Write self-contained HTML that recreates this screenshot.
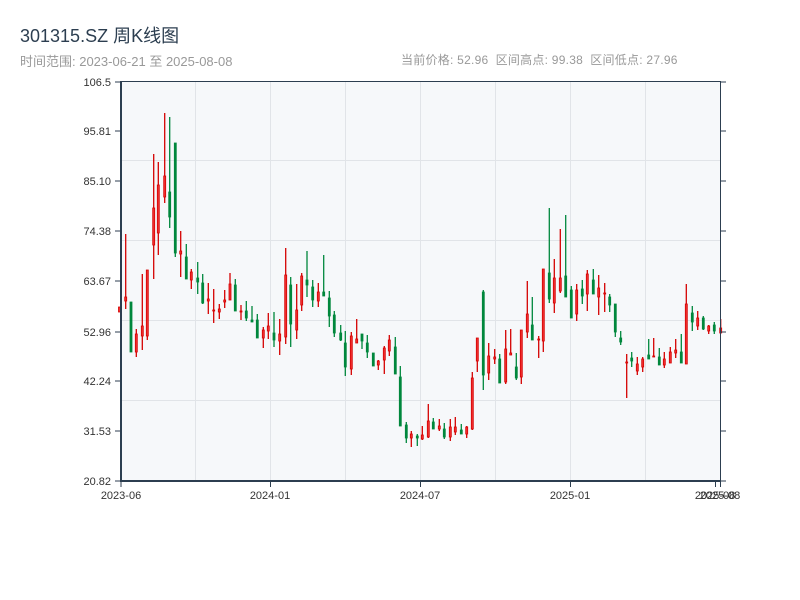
<!DOCTYPE html>
<html><head><meta charset="utf-8"><style>
body{margin:0;width:800px;height:600px;background:#fff;font-family:"Liberation Sans","Noto Sans CJK SC",sans-serif;position:relative;overflow:hidden}
.t{position:absolute;left:20px;top:22px;font-size:18px;color:#2c3e50;white-space:nowrap}
.s{position:absolute;left:20px;top:51px;font-size:13px;color:#999;white-space:nowrap}
.i{position:absolute;left:401px;top:51px;font-size:12px;letter-spacing:0.25px;color:#999;white-space:pre}
svg{position:absolute;left:0;top:0}
.r line{stroke:#d40000;stroke-width:1.3}
.r rect{fill:#f23030;stroke:#d40000;stroke-width:0.8}
.g line{stroke:#00873c;stroke-width:1.3}
.g rect{fill:#00873c;stroke:#00873c;stroke-width:0.8}
.yl{font-size:11px;fill:#333;text-anchor:end}
.xl{font-size:11px;fill:#333;text-anchor:middle}
</style></head><body>
<div class="t">301315.SZ 周K线图</div>
<div class="s">时间范围: 2023-06-21 至 2025-08-08</div>
<div class="i">当前价格: 52.96  区间高点: 99.38  区间低点: 27.96</div>
<svg width="800" height="600" font-family="Liberation Sans, sans-serif">
<rect x="121" y="81" width="599" height="400" fill="#f6f8fa"/>
<g stroke="#e1e4e8" stroke-width="1">
<line x1="195.5" y1="81" x2="195.5" y2="481"/><line x1="270.5" y1="81" x2="270.5" y2="481"/><line x1="345.5" y1="81" x2="345.5" y2="481"/><line x1="420.5" y1="81" x2="420.5" y2="481"/><line x1="495.5" y1="81" x2="495.5" y2="481"/><line x1="570.5" y1="81" x2="570.5" y2="481"/><line x1="645.5" y1="81" x2="645.5" y2="481"/>
<line x1="121" y1="160.5" x2="720" y2="160.5"/><line x1="121" y1="240.5" x2="720" y2="240.5"/><line x1="121" y1="320.5" x2="720" y2="320.5"/><line x1="121" y1="400.5" x2="720" y2="400.5"/>
</g>
<g id="c">
<g class="r"><line x1="119.5" y1="307" x2="119.5" y2="312"/><rect x="118.5" y="307" width="2" height="5"/></g>
<g class="r"><line x1="125.7" y1="234" x2="125.7" y2="309"/><rect x="124.7" y="297" width="2" height="4"/></g>
<g class="g"><line x1="131" y1="302" x2="131" y2="352"/><rect x="130" y="302" width="2" height="50"/></g>
<g class="r"><line x1="136.3" y1="329" x2="136.3" y2="357"/><rect x="135.3" y="334" width="2" height="18"/></g>
<g class="r"><line x1="142.3" y1="274" x2="142.3" y2="350"/><rect x="141.3" y="326" width="2" height="10"/></g>
<g class="r"><line x1="147.3" y1="270" x2="147.3" y2="340"/><rect x="146.3" y="270" width="2" height="66"/></g>
<g class="r"><line x1="153.7" y1="154" x2="153.7" y2="279"/><rect x="152.7" y="208" width="2" height="37"/></g>
<g class="r"><line x1="158.3" y1="162" x2="158.3" y2="255"/><rect x="157.3" y="185" width="2" height="48"/></g>
<g class="r"><line x1="164.7" y1="113" x2="164.7" y2="203"/><rect x="163.7" y="176" width="2" height="21"/></g>
<g class="g"><line x1="169.7" y1="117" x2="169.7" y2="228"/><rect x="168.7" y="192" width="2" height="25"/></g>
<g class="g"><line x1="175.3" y1="143" x2="175.3" y2="257"/><rect x="174.3" y="143" width="2" height="110"/></g>
<g class="r"><line x1="180.7" y1="231" x2="180.7" y2="277"/><rect x="179.7" y="251" width="2" height="3"/></g>
<g class="g"><line x1="186.3" y1="244" x2="186.3" y2="279"/><rect x="185.3" y="257" width="2" height="22"/></g>
<g class="r"><line x1="191.3" y1="269" x2="191.3" y2="289"/><rect x="190.3" y="272" width="2" height="8"/></g>
<g class="g"><line x1="197.7" y1="262" x2="197.7" y2="294"/><rect x="196.7" y="278" width="2" height="4"/></g>
<g class="g"><line x1="202.7" y1="274" x2="202.7" y2="304"/><rect x="201.7" y="283" width="2" height="20"/></g>
<g class="r"><line x1="208.3" y1="283" x2="208.3" y2="314"/><rect x="207.3" y="299" width="2" height="2"/></g>
<g class="r"><line x1="213.7" y1="289" x2="213.7" y2="323"/><rect x="212.7" y="310" width="2" height="1"/></g>
<g class="r"><line x1="219.3" y1="304" x2="219.3" y2="319"/><rect x="218.3" y="309" width="2" height="3"/></g>
<g class="r"><line x1="224.7" y1="290" x2="224.7" y2="308"/><rect x="223.7" y="300" width="2" height="2"/></g>
<g class="r"><line x1="230" y1="273" x2="230" y2="300"/><rect x="229" y="284" width="2" height="16"/></g>
<g class="g"><line x1="235.3" y1="279" x2="235.3" y2="311"/><rect x="234.3" y="285" width="2" height="26"/></g>
<g class="r"><line x1="241" y1="305" x2="241" y2="320"/><rect x="240" y="311" width="2" height="1"/></g>
<g class="g"><line x1="246.3" y1="301" x2="246.3" y2="321"/><rect x="245.3" y="311" width="2" height="7"/></g>
<g class="g"><line x1="252" y1="306" x2="252" y2="322"/><rect x="251" y="320" width="2" height="2"/></g>
<g class="g"><line x1="257.3" y1="314" x2="257.3" y2="338"/><rect x="256.3" y="320" width="2" height="18"/></g>
<g class="r"><line x1="263.3" y1="327" x2="263.3" y2="348"/><rect x="262.3" y="330" width="2" height="8"/></g>
<g class="r"><line x1="268.3" y1="313" x2="268.3" y2="339"/><rect x="267.3" y="326" width="2" height="5"/></g>
<g class="g"><line x1="274" y1="312" x2="274" y2="347"/><rect x="273" y="333" width="2" height="7"/></g>
<g class="r"><line x1="279.7" y1="319" x2="279.7" y2="355"/><rect x="278.7" y="334" width="2" height="7"/></g>
<g class="r"><line x1="285.7" y1="248" x2="285.7" y2="344"/><rect x="284.7" y="275" width="2" height="62"/></g>
<g class="g"><line x1="290.7" y1="277" x2="290.7" y2="347"/><rect x="289.7" y="285" width="2" height="39"/></g>
<g class="r"><line x1="296.7" y1="284" x2="296.7" y2="339"/><rect x="295.7" y="310" width="2" height="20"/></g>
<g class="r"><line x1="301.7" y1="273" x2="301.7" y2="311"/><rect x="300.7" y="276" width="2" height="29"/></g>
<g class="g"><line x1="307" y1="251" x2="307" y2="297"/><rect x="306" y="280" width="2" height="5"/></g>
<g class="g"><line x1="312.7" y1="280" x2="312.7" y2="307"/><rect x="311.7" y="287" width="2" height="13"/></g>
<g class="r"><line x1="318.3" y1="283" x2="318.3" y2="307"/><rect x="317.3" y="292" width="2" height="9"/></g>
<g class="g"><line x1="323.7" y1="255" x2="323.7" y2="296"/><rect x="322.7" y="292" width="2" height="4"/></g>
<g class="g"><line x1="329.3" y1="291" x2="329.3" y2="327"/><rect x="328.3" y="298" width="2" height="18"/></g>
<g class="g"><line x1="334.3" y1="311" x2="334.3" y2="337"/><rect x="333.3" y="315" width="2" height="18"/></g>
<g class="g"><line x1="340.7" y1="325" x2="340.7" y2="341"/><rect x="339.7" y="333" width="2" height="7"/></g>
<g class="g"><line x1="345.3" y1="331" x2="345.3" y2="376"/><rect x="344.3" y="343" width="2" height="24"/></g>
<g class="r"><line x1="351.3" y1="332" x2="351.3" y2="375"/><rect x="350.3" y="336" width="2" height="33"/></g>
<g class="r"><line x1="356.7" y1="319" x2="356.7" y2="343"/><rect x="355.7" y="339" width="2" height="4"/></g>
<g class="g"><line x1="362" y1="334" x2="362" y2="349"/><rect x="361" y="334" width="2" height="7"/></g>
<g class="g"><line x1="367.3" y1="335" x2="367.3" y2="358"/><rect x="366.3" y="343" width="2" height="9"/></g>
<g class="g"><line x1="373.3" y1="353" x2="373.3" y2="366"/><rect x="372.3" y="353" width="2" height="13"/></g>
<g class="r"><line x1="378.3" y1="360" x2="378.3" y2="370"/><rect x="377.3" y="361" width="2" height="4"/></g>
<g class="r"><line x1="384.3" y1="346" x2="384.3" y2="374"/><rect x="383.3" y="348" width="2" height="12"/></g>
<g class="r"><line x1="389.3" y1="335" x2="389.3" y2="356"/><rect x="388.3" y="340" width="2" height="11"/></g>
<g class="g"><line x1="395.3" y1="337" x2="395.3" y2="374"/><rect x="394.3" y="347" width="2" height="27"/></g>
<g class="g"><line x1="400.3" y1="366" x2="400.3" y2="426"/><rect x="399.3" y="377" width="2" height="49"/></g>
<g class="g"><line x1="406.3" y1="422" x2="406.3" y2="443"/><rect x="405.3" y="425" width="2" height="13"/></g>
<g class="r"><line x1="411.3" y1="431" x2="411.3" y2="447"/><rect x="410.3" y="434" width="2" height="4"/></g>
<g class="g"><line x1="417.3" y1="434" x2="417.3" y2="446"/><rect x="416.3" y="436" width="2" height="2"/></g>
<g class="r"><line x1="422.3" y1="426" x2="422.3" y2="440"/><rect x="421.3" y="435" width="2" height="4"/></g>
<g class="r"><line x1="428.3" y1="404" x2="428.3" y2="438"/><rect x="427.3" y="421" width="2" height="16"/></g>
<g class="g"><line x1="433.3" y1="418" x2="433.3" y2="429"/><rect x="432.3" y="422" width="2" height="7"/></g>
<g class="r"><line x1="439.3" y1="419" x2="439.3" y2="431"/><rect x="438.3" y="426" width="2" height="3"/></g>
<g class="g"><line x1="444.3" y1="423" x2="444.3" y2="439"/><rect x="443.3" y="429" width="2" height="8"/></g>
<g class="r"><line x1="450.3" y1="419" x2="450.3" y2="441"/><rect x="449.3" y="427" width="2" height="10"/></g>
<g class="r"><line x1="455.3" y1="417" x2="455.3" y2="435"/><rect x="454.3" y="427" width="2" height="5"/></g>
<g class="g"><line x1="461.3" y1="424" x2="461.3" y2="434"/><rect x="460.3" y="430" width="2" height="4"/></g>
<g class="r"><line x1="466.7" y1="426" x2="466.7" y2="438"/><rect x="465.7" y="427" width="2" height="7"/></g>
<g class="r"><line x1="472.3" y1="372" x2="472.3" y2="430"/><rect x="471.3" y="378" width="2" height="51"/></g>
<g class="r"><line x1="477.3" y1="338" x2="477.3" y2="372"/><rect x="476.3" y="338" width="2" height="23"/></g>
<g class="g"><line x1="483.3" y1="290" x2="483.3" y2="390"/><rect x="482.3" y="292" width="2" height="83"/></g>
<g class="r"><line x1="488.7" y1="343" x2="488.7" y2="380"/><rect x="487.7" y="356" width="2" height="17"/></g>
<g class="r"><line x1="494.7" y1="349" x2="494.7" y2="364"/><rect x="493.7" y="357" width="2" height="2"/></g>
<g class="g"><line x1="499.7" y1="354" x2="499.7" y2="383"/><rect x="498.7" y="359" width="2" height="24"/></g>
<g class="r"><line x1="505.7" y1="330" x2="505.7" y2="384"/><rect x="504.7" y="349" width="2" height="33"/></g>
<g class="r"><line x1="510.7" y1="329" x2="510.7" y2="355"/><rect x="509.7" y="353" width="2" height="2"/></g>
<g class="g"><line x1="516.3" y1="353" x2="516.3" y2="380"/><rect x="515.3" y="367" width="2" height="11"/></g>
<g class="r"><line x1="521.3" y1="330" x2="521.3" y2="384"/><rect x="520.3" y="330" width="2" height="47"/></g>
<g class="r"><line x1="527.3" y1="281" x2="527.3" y2="338"/><rect x="526.3" y="314" width="2" height="18"/></g>
<g class="g"><line x1="532.3" y1="297" x2="532.3" y2="340"/><rect x="531.3" y="325" width="2" height="15"/></g>
<g class="r"><line x1="538.7" y1="336" x2="538.7" y2="358"/><rect x="537.7" y="339" width="2" height="1"/></g>
<g class="r"><line x1="543.3" y1="269" x2="543.3" y2="352"/><rect x="542.3" y="269" width="2" height="72"/></g>
<g class="g"><line x1="549.3" y1="208" x2="549.3" y2="303"/><rect x="548.3" y="273" width="2" height="26"/></g>
<g class="r"><line x1="554.3" y1="259" x2="554.3" y2="313"/><rect x="553.3" y="278" width="2" height="25"/></g>
<g class="r"><line x1="560.3" y1="229" x2="560.3" y2="293"/><rect x="559.3" y="278" width="2" height="13"/></g>
<g class="g"><line x1="565.7" y1="215" x2="565.7" y2="297"/><rect x="564.7" y="276" width="2" height="21"/></g>
<g class="g"><line x1="571.3" y1="286" x2="571.3" y2="318"/><rect x="570.3" y="290" width="2" height="28"/></g>
<g class="r"><line x1="576.7" y1="284" x2="576.7" y2="321"/><rect x="575.7" y="290" width="2" height="24"/></g>
<g class="g"><line x1="582.3" y1="280" x2="582.3" y2="304"/><rect x="581.3" y="289" width="2" height="7"/></g>
<g class="r"><line x1="587.3" y1="270" x2="587.3" y2="311"/><rect x="586.3" y="274" width="2" height="20"/></g>
<g class="g"><line x1="593.3" y1="269" x2="593.3" y2="294"/><rect x="592.3" y="280" width="2" height="14"/></g>
<g class="r"><line x1="598.7" y1="275" x2="598.7" y2="315"/><rect x="597.7" y="288" width="2" height="9"/></g>
<g class="r"><line x1="604.7" y1="283" x2="604.7" y2="312"/><rect x="603.7" y="293" width="2" height="1"/></g>
<g class="g"><line x1="609.7" y1="294" x2="609.7" y2="312"/><rect x="608.7" y="297" width="2" height="8"/></g>
<g class="g"><line x1="615.3" y1="304" x2="615.3" y2="337"/><rect x="614.3" y="304" width="2" height="28"/></g>
<g class="g"><line x1="620.7" y1="331" x2="620.7" y2="345"/><rect x="619.7" y="338" width="2" height="4"/></g>
<g class="r"><line x1="626.7" y1="354" x2="626.7" y2="398"/><rect x="625.7" y="362" width="2" height="1"/></g>
<g class="g"><line x1="631.7" y1="352" x2="631.7" y2="367"/><rect x="630.7" y="358" width="2" height="3"/></g>
<g class="r"><line x1="637.3" y1="357" x2="637.3" y2="375"/><rect x="636.3" y="364" width="2" height="7"/></g>
<g class="r"><line x1="642.7" y1="357" x2="642.7" y2="372"/><rect x="641.7" y="359" width="2" height="8"/></g>
<g class="g"><line x1="648.7" y1="339" x2="648.7" y2="359"/><rect x="647.7" y="355" width="2" height="4"/></g>
<g class="r"><line x1="653.7" y1="338" x2="653.7" y2="357"/><rect x="652.7" y="356" width="2" height="1"/></g>
<g class="g"><line x1="659.3" y1="348" x2="659.3" y2="365"/><rect x="658.3" y="357" width="2" height="8"/></g>
<g class="r"><line x1="664.3" y1="352" x2="664.3" y2="368"/><rect x="663.3" y="359" width="2" height="6"/></g>
<g class="r"><line x1="670.3" y1="347" x2="670.3" y2="363"/><rect x="669.3" y="352" width="2" height="11"/></g>
<g class="r"><line x1="675.7" y1="339" x2="675.7" y2="358"/><rect x="674.7" y="350" width="2" height="3"/></g>
<g class="g"><line x1="681.3" y1="334" x2="681.3" y2="363"/><rect x="680.3" y="352" width="2" height="11"/></g>
<g class="r"><line x1="686.3" y1="284" x2="686.3" y2="364"/><rect x="685.3" y="304" width="2" height="60"/></g>
<g class="g"><line x1="692.3" y1="306" x2="692.3" y2="331"/><rect x="691.3" y="313" width="2" height="9"/></g>
<g class="r"><line x1="697.7" y1="311" x2="697.7" y2="330"/><rect x="696.7" y="318" width="2" height="8"/></g>
<g class="g"><line x1="703.3" y1="316" x2="703.3" y2="330"/><rect x="702.3" y="318" width="2" height="11"/></g>
<g class="r"><line x1="708.7" y1="325" x2="708.7" y2="334"/><rect x="707.7" y="326" width="2" height="5"/></g>
<g class="g"><line x1="714.3" y1="322" x2="714.3" y2="334"/><rect x="713.3" y="325" width="2" height="6"/></g>
<g class="r"><line x1="720.7" y1="319" x2="720.7" y2="333"/><rect x="719.7" y="328" width="2" height="5"/></g>
</g>
<g stroke="#2c3e50" stroke-width="1">
<line x1="121" y1="81" x2="121" y2="482" stroke-width="2"/>
<line x1="120" y1="481" x2="721" y2="481" stroke-width="2"/>
<line x1="720.5" y1="81" x2="720.5" y2="482"/>
<line x1="121" y1="81.5" x2="721" y2="81.5"/>
<line x1="115" y1="82" x2="121" y2="82"/><line x1="115" y1="131" x2="121" y2="131"/><line x1="115" y1="181" x2="121" y2="181"/><line x1="115" y1="231" x2="121" y2="231"/><line x1="115" y1="281" x2="121" y2="281"/><line x1="115" y1="332" x2="121" y2="332"/><line x1="115" y1="381" x2="121" y2="381"/><line x1="115" y1="431" x2="121" y2="431"/><line x1="115" y1="481" x2="121" y2="481"/>
<line x1="720" y1="82" x2="726" y2="82"/><line x1="720" y1="131" x2="726" y2="131"/><line x1="720" y1="181" x2="726" y2="181"/><line x1="720" y1="231" x2="726" y2="231"/><line x1="720" y1="281" x2="726" y2="281"/><line x1="720" y1="332" x2="726" y2="332"/><line x1="720" y1="381" x2="726" y2="381"/><line x1="720" y1="431" x2="726" y2="431"/><line x1="720" y1="481" x2="726" y2="481"/>
<line x1="121" y1="481" x2="121" y2="487"/><line x1="270.5" y1="481" x2="270.5" y2="487"/><line x1="420.5" y1="481" x2="420.5" y2="487"/><line x1="570.5" y1="481" x2="570.5" y2="487"/><line x1="715.5" y1="481" x2="715.5" y2="487"/><line x1="720.5" y1="481" x2="720.5" y2="487"/>
</g>
<text class="yl" x="111" y="86">106.5</text>
<text class="yl" x="111" y="135">95.81</text>
<text class="yl" x="111" y="185">85.10</text>
<text class="yl" x="111" y="235">74.38</text>
<text class="yl" x="111" y="285">63.67</text>
<text class="yl" x="111" y="336">52.96</text>
<text class="yl" x="111" y="385">42.24</text>
<text class="yl" x="111" y="435">31.53</text>
<text class="yl" x="111" y="485">20.82</text>
<text class="xl" x="121" y="499">2023-06</text>
<text class="xl" x="270" y="499">2024-01</text>
<text class="xl" x="420" y="499">2024-07</text>
<text class="xl" x="570" y="499">2025-01</text>
<text class="xl" x="715" y="499">2025-08</text>
<text class="xl" x="720" y="499">2025-08</text>
</svg>
</body></html>
